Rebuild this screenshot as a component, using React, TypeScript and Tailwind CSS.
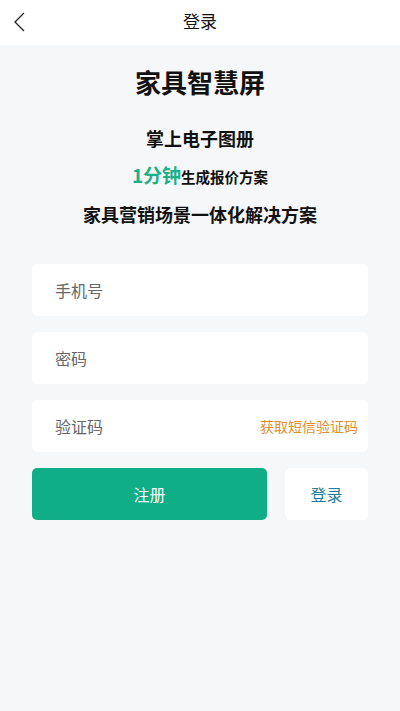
import React from 'react'

const font = { fontFamily: '"Noto Sans CJK SC", "Noto Sans", sans-serif' }

function Field({ placeholder, extra }: { placeholder: string; extra?: string }) {
  return (
    <div className="flex h-[52px] items-center justify-between rounded-md bg-white pl-[23px] pr-[10px]">
      <input
        className="min-w-0 flex-1 bg-transparent text-[16px] text-[#333] outline-none placeholder:text-[#666]"
        placeholder={placeholder}
      />
      {extra && <span className="shrink-0 text-[14px] text-[#e08f2c]">{extra}</span>}
    </div>
  )
}

export default function App() {
  return (
    <div className="min-h-[711px] w-full bg-[#f6f7f9]" style={font}>
      <div className="relative flex h-[45px] items-center justify-center bg-white pb-[3px]">
        <svg className="absolute left-[13px] top-[12px]" width="12" height="20" viewBox="0 0 12 20" fill="none">
          <path d="M11 1 L2 10 L11 19" stroke="#222" strokeWidth="1.3" />
        </svg>
        <span className="text-[17px] text-[#111]">登录</span>
      </div>

      <div className="flex flex-col items-center">
        <h1 className="mt-[20px] text-[26px] font-bold leading-[34px] text-[#111]">家具智慧屏</h1>
        <p className="mt-[27px] text-[18px] font-bold leading-[24px] text-[#111]">掌上电子图册</p>
        <p className="mt-[13px] flex items-baseline leading-[24px] font-bold text-[#111]">
          <span className="text-[19px] text-[#1ab08a]">1分钟</span>
          <span className="text-[14.5px]">生成报价方案</span>
        </p>
        <p className="mt-[13px] text-[18px] font-bold leading-[24px] text-[#111]">家具营销场景一体化解决方案</p>
      </div>

      <div className="mx-[32px] mt-[38px] flex flex-col gap-[16px]">
        <Field placeholder="手机号" />
        <Field placeholder="密码" />
        <Field placeholder="验证码" extra="获取短信验证码" />
        <div className="flex gap-[18px]">
          <button className="h-[52px] flex-1 rounded-[5px] bg-[#0fae86] text-[16px] text-white">注册</button>
          <button className="h-[52px] w-[83px] rounded-md bg-white text-[16px] text-[#1e7d9c]">登录</button>
        </div>
      </div>
    </div>
  )
}
